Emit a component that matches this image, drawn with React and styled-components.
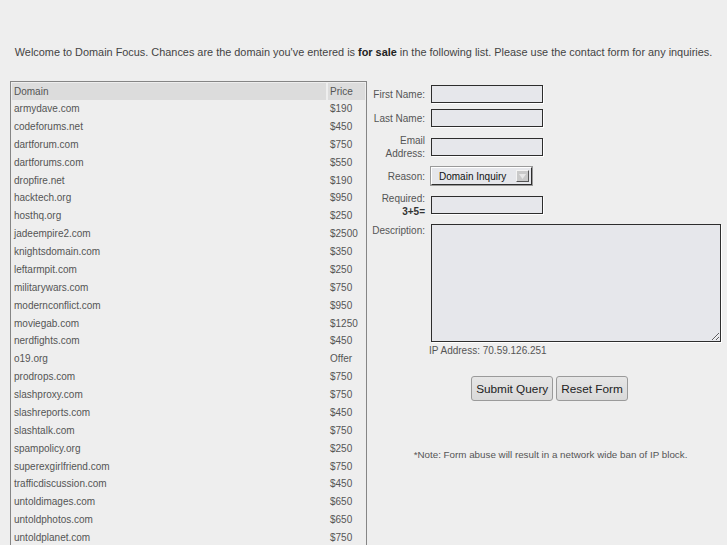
import React from "react";
import styled, { createGlobalStyle } from "styled-components";

const domains = [
  ["armydave.com", "$190"],
  ["codeforums.net", "$450"],
  ["dartforum.com", "$750"],
  ["dartforums.com", "$550"],
  ["dropfire.net", "$190"],
  ["hacktech.org", "$950"],
  ["hosthq.org", "$250"],
  ["jadeempire2.com", "$2500"],
  ["knightsdomain.com", "$350"],
  ["leftarmpit.com", "$250"],
  ["militarywars.com", "$750"],
  ["modernconflict.com", "$950"],
  ["moviegab.com", "$1250"],
  ["nerdfights.com", "$450"],
  ["o19.org", "Offer"],
  ["prodrops.com", "$750"],
  ["slashproxy.com", "$750"],
  ["slashreports.com", "$450"],
  ["slashtalk.com", "$750"],
  ["spampolicy.org", "$250"],
  ["superexgirlfriend.com", "$750"],
  ["trafficdiscussion.com", "$450"],
  ["untoldimages.com", "$650"],
  ["untoldphotos.com", "$650"],
  ["untoldplanet.com", "$750"],
];

const GlobalStyle = createGlobalStyle`
  html, body {
    margin: 0;
    padding: 0;
    background: #eeeeee;
    font-family: "Liberation Sans", Arial, sans-serif;
    font-size: 10px;
    color: #555;
    overflow: hidden;
  }
`;

const Page = styled.div`
  width: 727px;
  height: 545px;
  overflow: hidden;
`;

const Intro = styled.p`
  margin: 0;
  padding-top: 45px;
  height: 36px;
  line-height: 14px;
  text-align: center;
  font-size: 10.9px;
  color: #444;
  white-space: nowrap;
  b {
    color: #222;
  }
`;

const Main = styled.div`
  display: flex;
  align-items: flex-start;
`;

const DomainTable = styled.div`
  margin-left: 10px;
  width: 353px;
  border: 1px solid #858585;
  border-bottom: none;
  padding: 0 1px;
  display: grid;
  grid-template-columns: 314px 37px;
  column-gap: 2px;
  flex-shrink: 0;
`;

const Cell = styled.div`
  height: ${(p) => (p.$head ? "17px" : "17.875px")};
  margin-top: ${(p) => (p.$head ? "1px" : "0")};
  line-height: ${(p) => (p.$head ? "17px" : "17.875px")};
  padding-left: 2px;
  background: ${(p) => (p.$head ? "#dcdcdc" : "transparent")};
  color: #555;
  white-space: nowrap;
  overflow: hidden;
`;

const FormCol = styled.div`
  flex: 1;
  padding: 4px 7px 0 5px;
`;

const FormGrid = styled.div`
  display: grid;
  grid-template-columns: 53px 1fr;
  column-gap: 6px;
  row-gap: 6px;
`;

const Label = styled.label`
  text-align: right;
  line-height: 13px;
  align-self: ${(p) => (p.$top ? "start" : "center")};
  color: #555;
  b {
    color: #333;
  }
`;

const Field = styled.div`
  height: ${(p) => p.$h || 18}px;
  display: flex;
  align-items: center;
`;

const TextInput = styled.input`
  box-sizing: border-box;
  width: 112px;
  height: 18px;
  margin: 0;
  border: 1px solid #2d2d2d;
  box-shadow: 1px 1px 0 #ffffff;
  background: #e6e7eb;
  outline: none;
`;

const SelectBox = styled.div`
  box-sizing: border-box;
  width: 101px;
  height: 18px;
  display: flex;
  align-items: center;
  justify-content: space-between;
  padding: 0 2px 0 7px;
  border: 1px solid;
  border-color: #ffffff #2d2d2d #2d2d2d #ffffff;
  box-shadow: 0 0 0 1px #9a9a9a;
  background: #e6e7eb;
  font-size: 10px;
  color: #111;
`;

const SelectArrow = styled.span`
  box-sizing: border-box;
  width: 13px;
  height: 12px;
  background: #c9c9c9;
  border: 1px solid;
  border-color: #f4f4f4 #555 #555 #f4f4f4;
  display: flex;
  align-items: center;
  justify-content: center;
`;

const TextArea = styled.textarea`
  box-sizing: border-box;
  width: 290px;
  height: 118px;
  margin: 0;
  border: 1px solid #2d2d2d;
  box-shadow: 1px 1px 0 #ffffff;
  background: #e6e7eb;
  outline: none;
  display: block;
`;

const IpLine = styled.div`
  margin: 2px 0 0 57px;
  line-height: 14px;
  color: #555;
`;

const Buttons = styled.div`
  display: flex;
  justify-content: center;
  gap: 3px;
  margin-top: 18px;
  padding-left: 6px;
`;

const Button = styled.button`
  height: 25px;
  padding: 0 4px;
  border: 1px solid #9a9a9a;
  border-radius: 3px;
  background: linear-gradient(#e6e6e6, #d9d9d9);
  font-family: "Liberation Sans", Arial, sans-serif;
  font-size: 11.8px;
  color: #222;
`;

const Note = styled.p`
  margin: 48px 0 0;
  padding-left: 8px;
  text-align: center;
  font-size: 9.8px;
  color: #555;
`;

export default function App() {
  return (
    <Page>
      <GlobalStyle />
      <Intro>
        Welcome to Domain Focus. Chances are the domain you've entered is{" "}
        <b>for sale</b> in the following list. Please use the contact form for
        any inquiries.
      </Intro>
      <Main>
        <DomainTable>
          <Cell $head>Domain</Cell>
          <Cell $head>Price</Cell>
          {domains.map(([name, price]) => (
            <React.Fragment key={name}>
              <Cell>{name}</Cell>
              <Cell>{price}</Cell>
            </React.Fragment>
          ))}
        </DomainTable>
        <FormCol>
          <FormGrid>
            <Label>First Name:</Label>
            <Field>
              <TextInput />
            </Field>
            <Label>Last Name:</Label>
            <Field>
              <TextInput />
            </Field>
            <Label>
              Email
              <br />
              Address:
            </Label>
            <Field $h={28}>
              <TextInput />
            </Field>
            <Label>Reason:</Label>
            <Field>
              <SelectBox>
                <span>Domain Inquiry</span>
                <SelectArrow>
                  <svg width="7" height="5" viewBox="0 0 7 5">
                    <path d="M0 0h7L3.5 5z" fill="#e8e8e8" />
                  </svg>
                </SelectArrow>
              </SelectBox>
            </Field>
            <Label>
              Required:
              <br />
              <b>3+5=</b>
            </Label>
            <Field $h={27}>
              <TextInput />
            </Field>
            <Label $top>Description:</Label>
            <Field $h={118}>
              <TextArea />
            </Field>
          </FormGrid>
          <IpLine>IP Address: 70.59.126.251</IpLine>
          <Buttons>
            <Button>Submit Query</Button>
            <Button>Reset Form</Button>
          </Buttons>
          <Note>*Note: Form abuse will result in a network wide ban of IP block.</Note>
        </FormCol>
      </Main>
    </Page>
  );
}
